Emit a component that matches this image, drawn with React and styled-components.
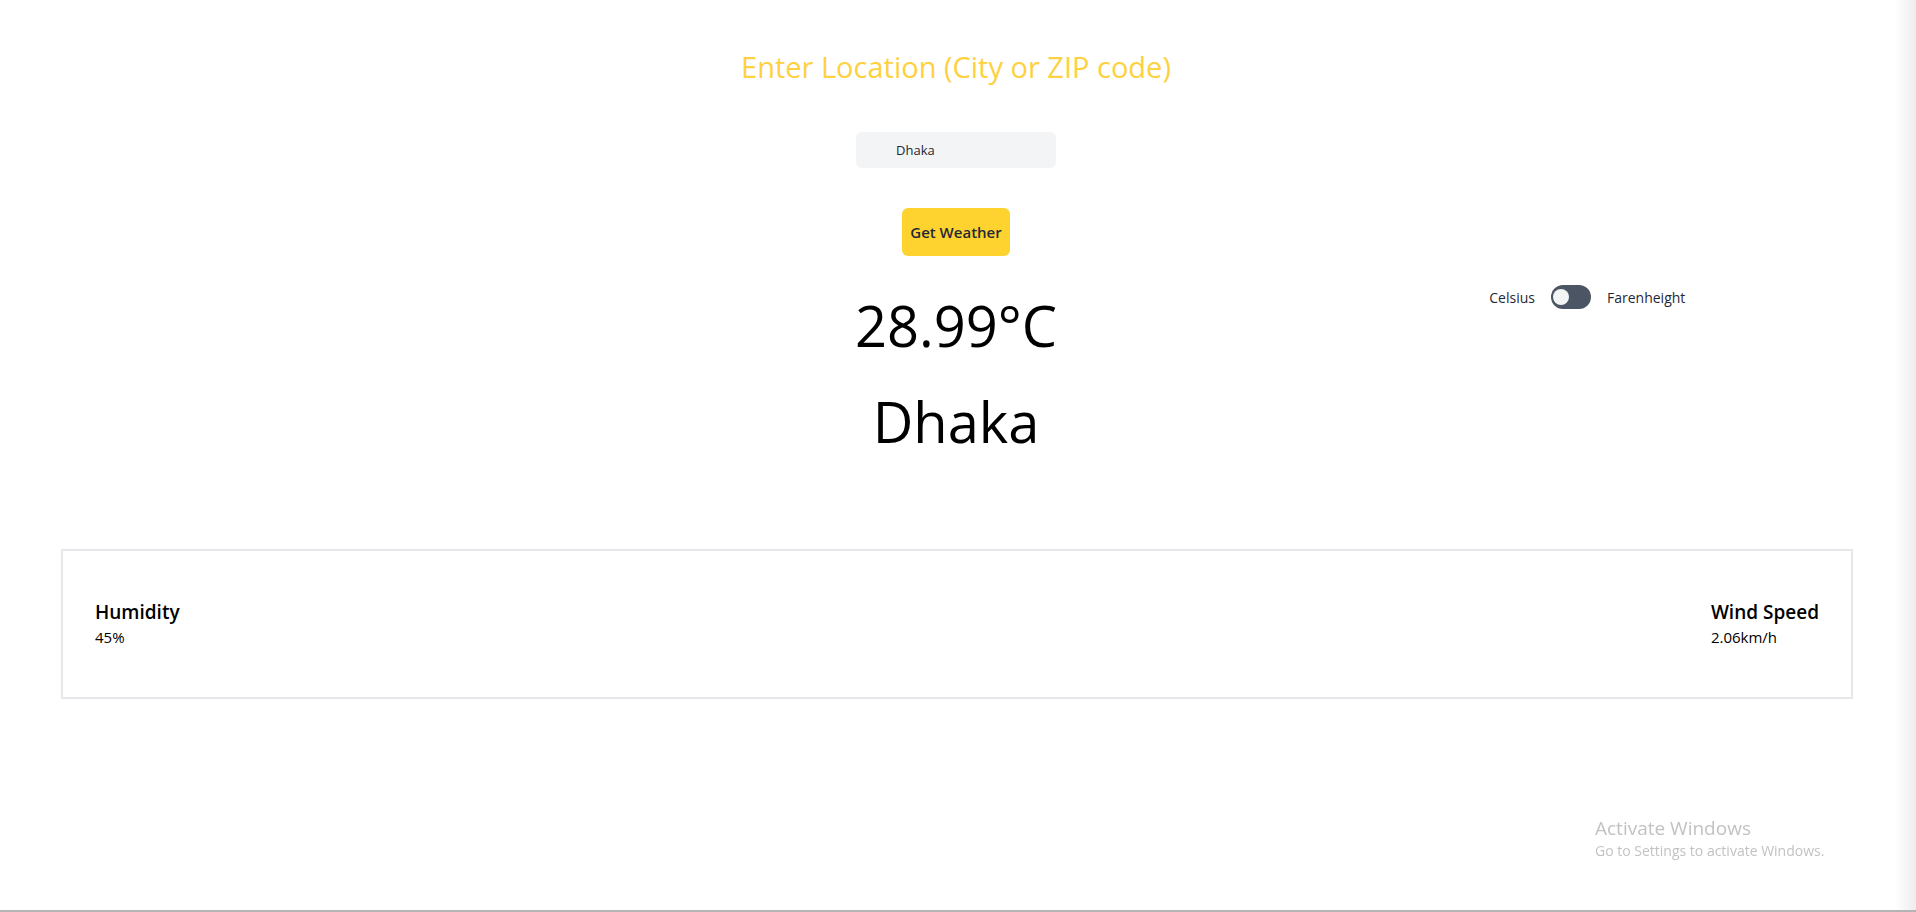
import React, { useState } from "react";
import styled, { createGlobalStyle } from "styled-components";

const GlobalStyle = createGlobalStyle`
  html {
    min-height: 100%;
    background: linear-gradient(to right, #ffffff calc(100% - 22px), #ededed);
    box-shadow: inset 0 -2px 0 #b4b4b4;
  }
  body {
    margin: 0;
    font-family: "Open Sans", "Noto Sans", sans-serif;
    color: #000;
  }
  * {
    box-sizing: border-box;
  }
`;

const Page = styled.main`
  display: flex;
  flex-direction: column;
  align-items: center;
  padding: 49px 4px 0 0;
`;

const Title = styled.h1`
  margin: 0;
  font-size: 29px;
  line-height: 36px;
  font-weight: 400;
  color: #fdd13f;
`;

const Form = styled.form`
  display: flex;
  flex-direction: column;
  align-items: center;
  gap: 40px;
  margin-top: 47px;
`;

const Input = styled.input`
  width: 200px;
  height: 36px;
  padding: 0 12px 0 40px;
  border: none;
  border-radius: 6px;
  background: #f3f4f6;
  color: #1f2937;
  font-family: inherit;
  font-size: 13px;
  outline: none;
`;

const Button = styled.button`
  height: 48px;
  padding: 0 8px;
  border: none;
  border-radius: 6px;
  background: #fed330;
  color: #1f2937;
  font-family: inherit;
  font-size: 15px;
  font-weight: 600;
  cursor: pointer;
`;

const Readout = styled.section`
  width: 100%;
  display: grid;
  grid-template-columns: repeat(3, 1fr);
  align-items: start;
  margin-top: 29px;
`;

const Center = styled.div`
  grid-column: 2;
  display: flex;
  flex-direction: column;
  align-items: center;
  gap: 36px;
  padding-top: 10px;
`;

const BigText = styled.div`
  font-size: 56px;
  line-height: 60px;
  font-weight: 400;
`;

const UnitSwitch = styled.div`
  grid-column: 3;
  grid-row: 1;
  justify-self: center;
  margin-right: 12px;
  display: flex;
  align-items: center;
  gap: 16px;
  font-size: 14px;
  color: #1f2937;
`;

const Track = styled.button`
  position: relative;
  width: 40px;
  height: 24px;
  padding: 0;
  border: none;
  border-radius: 12px;
  background: #4b5563;
  cursor: pointer;
`;

const Knob = styled.span`
  position: absolute;
  top: 4px;
  left: ${({ $on }) => ($on ? "20px" : "2px")};
  width: 16px;
  height: 16px;
  border-radius: 50%;
  background: #f3f4f6;
`;

const StatsCard = styled.section`
  align-self: stretch;
  margin: 98px 59px 0 61px;
  height: 150px;
  border: 2px solid #e5e7eb;
  padding: 0 32px;
  display: flex;
  justify-content: space-between;
  align-items: center;
`;

const Stat = styled.div`
  display: flex;
  flex-direction: column;
`;

const StatLabel = styled.div`
  font-size: 19px;
  line-height: 26px;
  font-weight: 600;
`;

const StatValue = styled.div`
  font-size: 15px;
  line-height: 24px;
`;

const Watermark = styled.div`
  position: fixed;
  top: 816px;
  left: 1595px;
  color: #c2c2c2;
  pointer-events: none;
`;

const WatermarkTitle = styled.div`
  font-size: 19px;
  line-height: 25px;
`;

const WatermarkText = styled.div`
  font-size: 14px;
  line-height: 20px;
`;

export default function App() {
  const [location, setLocation] = useState("Dhaka");
  const [fahrenheit, setFahrenheit] = useState(false);

  const weather = { tempC: 28.99, city: "Dhaka", humidity: 45, wind: 2.06 };
  const temp = fahrenheit
    ? `${((weather.tempC * 9) / 5 + 32).toFixed(2)}°F`
    : `${weather.tempC}°C`;

  return (
    <>
      <GlobalStyle />
      <Page>
        <Title>Enter Location (City or ZIP code)</Title>

        <Form onSubmit={(e) => e.preventDefault()}>
          <Input
            type="text"
            value={location}
            onChange={(e) => setLocation(e.target.value)}
          />
          <Button type="submit">Get Weather</Button>
        </Form>

        <Readout>
          <Center>
            <BigText>{temp}</BigText>
            <BigText>{weather.city}</BigText>
          </Center>
          <UnitSwitch>
            <span>Celsius</span>
            <Track type="button" onClick={() => setFahrenheit(!fahrenheit)}>
              <Knob $on={fahrenheit} />
            </Track>
            <span>Farenheight</span>
          </UnitSwitch>
        </Readout>

        <StatsCard>
          <Stat>
            <StatLabel>Humidity</StatLabel>
            <StatValue>{weather.humidity}%</StatValue>
          </Stat>
          <Stat>
            <StatLabel>Wind Speed</StatLabel>
            <StatValue>{weather.wind}km/h</StatValue>
          </Stat>
        </StatsCard>
      </Page>

      <Watermark>
        <WatermarkTitle>Activate Windows</WatermarkTitle>
        <WatermarkText>Go to Settings to activate Windows.</WatermarkText>
      </Watermark>
    </>
  );
}
